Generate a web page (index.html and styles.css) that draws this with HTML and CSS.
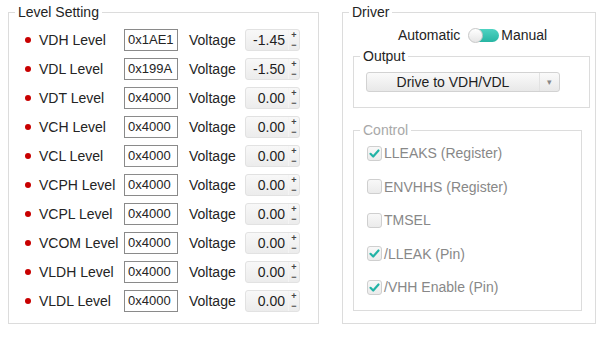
FILE: index.html
```html
<!DOCTYPE html>
<html>
<head>
<meta charset="utf-8">
<link rel="stylesheet" href="styles.css">
</head>
<body>
<div class="page">
  <fieldset class="group levels">
    <legend class="legend">Level Setting</legend>
    <div class="rows">
      <div class="row"><span class="dot"></span><span class="lbl">VDH Level</span><span class="hex">0x1AE1</span><span class="vlbl">Voltage</span><span class="spin"><span class="val">-1.45</span><span class="arrows"><span>+</span><span>−</span></span></span></div>
      <div class="row"><span class="dot"></span><span class="lbl">VDL Level</span><span class="hex">0x199A</span><span class="vlbl">Voltage</span><span class="spin"><span class="val">-1.50</span><span class="arrows"><span>+</span><span>−</span></span></span></div>
      <div class="row"><span class="dot"></span><span class="lbl">VDT Level</span><span class="hex">0x4000</span><span class="vlbl">Voltage</span><span class="spin"><span class="val">0.00</span><span class="arrows"><span>+</span><span>−</span></span></span></div>
      <div class="row"><span class="dot"></span><span class="lbl">VCH Level</span><span class="hex">0x4000</span><span class="vlbl">Voltage</span><span class="spin"><span class="val">0.00</span><span class="arrows"><span>+</span><span>−</span></span></span></div>
      <div class="row"><span class="dot"></span><span class="lbl">VCL Level</span><span class="hex">0x4000</span><span class="vlbl">Voltage</span><span class="spin"><span class="val">0.00</span><span class="arrows"><span>+</span><span>−</span></span></span></div>
      <div class="row"><span class="dot"></span><span class="lbl">VCPH Level</span><span class="hex">0x4000</span><span class="vlbl">Voltage</span><span class="spin"><span class="val">0.00</span><span class="arrows"><span>+</span><span>−</span></span></span></div>
      <div class="row"><span class="dot"></span><span class="lbl">VCPL Level</span><span class="hex">0x4000</span><span class="vlbl">Voltage</span><span class="spin"><span class="val">0.00</span><span class="arrows"><span>+</span><span>−</span></span></span></div>
      <div class="row"><span class="dot"></span><span class="lbl">VCOM Level</span><span class="hex">0x4000</span><span class="vlbl">Voltage</span><span class="spin"><span class="val">0.00</span><span class="arrows"><span>+</span><span>−</span></span></span></div>
      <div class="row"><span class="dot"></span><span class="lbl">VLDH Level</span><span class="hex">0x4000</span><span class="vlbl">Voltage</span><span class="spin"><span class="val">0.00</span><span class="arrows"><span>+</span><span>−</span></span></span></div>
      <div class="row"><span class="dot"></span><span class="lbl">VLDL Level</span><span class="hex">0x4000</span><span class="vlbl">Voltage</span><span class="spin"><span class="val">0.00</span><span class="arrows"><span>+</span><span>−</span></span></span></div>
    </div>
  </fieldset>

  <fieldset class="group driver">
    <legend class="legend">Driver</legend>
    <div class="mode">
      <span>Automatic</span>
      <span class="toggle"><span class="knob"></span></span>
      <span>Manual</span>
    </div>
    <fieldset class="group output">
      <legend class="legend">Output</legend>
      <div class="select">
        <span class="sel-text">Drive to VDH/VDL</span>
        <span class="sel-arrow">▾</span>
      </div>
    </fieldset>
    <fieldset class="group control">
      <legend class="legend legend-dim">Control</legend>
      <div class="checks">
        <div class="check"><span class="box on"><svg viewBox="0 0 15 15" width="15" height="15"><path d="M3.5 7.8 L6.2 10.5 L11.5 4.5" fill="none" stroke="#22b3a6" stroke-width="2.2" stroke-linecap="round" stroke-linejoin="round"/></svg></span><span>LLEAKS (Register)</span></div>
        <div class="check"><span class="box"></span><span>ENVHHS (Register)</span></div>
        <div class="check"><span class="box"></span><span>TMSEL</span></div>
        <div class="check"><span class="box on"><svg viewBox="0 0 15 15" width="15" height="15"><path d="M3.5 7.8 L6.2 10.5 L11.5 4.5" fill="none" stroke="#22b3a6" stroke-width="2.2" stroke-linecap="round" stroke-linejoin="round"/></svg></span><span>/LLEAK (Pin)</span></div>
        <div class="check"><span class="box on"><svg viewBox="0 0 15 15" width="15" height="15"><path d="M3.5 7.8 L6.2 10.5 L11.5 4.5" fill="none" stroke="#22b3a6" stroke-width="2.2" stroke-linecap="round" stroke-linejoin="round"/></svg></span><span>/VHH Enable (Pin)</span></div>
      </div>
    </fieldset>
  </fieldset>
</div>
</body>
</html>
```

FILE: styles.css
```css
html, body {
  margin: 0;
  padding: 0;
  background: #ffffff;
}
body {
  font-family: "Liberation Sans", Arial, sans-serif;
  font-size: 14px;
  color: #242424;
}
.page {
  display: flex;
  align-items: flex-start;
  padding: 4px 0 0 8px;
  gap: 23px;
}
.group {
  margin: 0;
  padding: 0;
  border: 1px solid #dcdcdc;
  min-width: 0;
}
.legend {
  margin-left: 6px;
  padding: 0 3px;
  line-height: 16px;
  font-size: 14px;
  color: #242424;
}
.legend-dim {
  color: #a8a8a8;
}
.levels {
  width: 311px;
  box-sizing: border-box;
}
.rows {
  padding: 5px 0 8px 16px;
  display: flex;
  flex-direction: column;
}
.row {
  height: 29px;
  display: flex;
  align-items: center;
}
.dot {
  width: 6px;
  height: 6px;
  border-radius: 50%;
  background: #c80000;
  margin-right: 8px;
  flex: none;
}
.lbl {
  width: 85px;
  flex: none;
  white-space: nowrap;
}
.hex {
  box-sizing: border-box;
  width: 54px;
  height: 22px;
  border: 1px solid #8a8a8a;
  font-size: 13px;
  line-height: 20px;
  padding-left: 3px;
  color: #242424;
  flex: none;
}
.vlbl {
  margin-left: 11px;
  width: 56px;
  flex: none;
}
.spin {
  box-sizing: border-box;
  width: 55px;
  height: 22px;
  border: 1px solid #e2e2e2;
  border-radius: 3px;
  background: linear-gradient(#f8f8f8, #ececec);
  display: flex;
  align-items: stretch;
  flex: none;
}
.val {
  flex: 1;
  text-align: right;
  line-height: 20px;
  color: #1e1e1e;
  padding-right: 3px;
}
.arrows {
  width: 10px;
  display: flex;
  flex-direction: column;
  font-size: 9px;
  line-height: 10px;
  text-align: center;
  color: #444;
  border-left: 1px solid #f4f4f4;
  font-weight: bold;
}
.driver {
  width: 254px;
  box-sizing: border-box;
  height: 320px;
}
.mode {
  display: flex;
  align-items: center;
  height: 16px;
  margin-top: 7px;
  padding-left: 55px;
}
.toggle {
  position: relative;
  width: 30px;
  height: 13px;
  border-radius: 7px;
  background: linear-gradient(#4fd3c2, #27b5a3);
  margin: 0 2px 0 9px;
}
.knob {
  position: absolute;
  left: -1px;
  top: -1px;
  width: 15px;
  height: 15px;
  box-sizing: border-box;
  border-radius: 50%;
  border: 1px solid #c8c8c8;
  background: linear-gradient(#ffffff, #e6e6e6);
}
.output {
  margin: 5px 5px 0 10px;
}
.select {
  margin: 8px 29px 15px 12px;
  height: 20px;
  box-sizing: border-box;
  border: 1px solid #d2d2d2;
  border-radius: 3px;
  background: linear-gradient(#fafafa, #e8e8e8);
  display: flex;
  align-items: center;
}
.sel-text {
  flex: 1;
  text-align: center;
  color: #1e1e1e;
  line-height: 18px;
}
.sel-arrow {
  width: 19px;
  border-left: 1px solid #e2e2e2;
  text-align: center;
  font-size: 9px;
  color: #888;
  line-height: 18px;
}
.control {
  margin: 14px 13px 0 10px;
}
.checks {
  display: flex;
  flex-direction: column;
  gap: 17.5px;
  padding: 7px 0 15px 13px;
}
.check {
  display: flex;
  align-items: center;
  height: 16px;
  color: #888888;
}
.box {
  box-sizing: border-box;
  width: 15px;
  height: 15px;
  border: 1px solid #cfcfcf;
  border-radius: 3px;
  background: linear-gradient(#f8f8f8, #ebebeb);
  margin-right: 2px;
  position: relative;
  flex: none;
}
.box svg {
  position: absolute;
  left: -1px;
  top: -1px;
}
```
